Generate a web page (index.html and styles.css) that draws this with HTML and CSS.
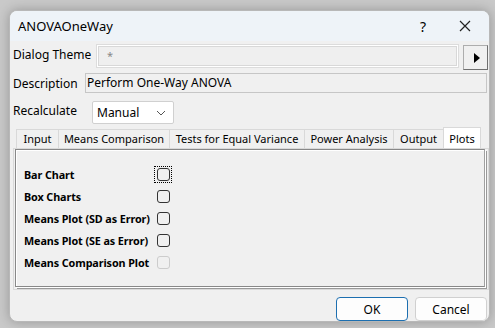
FILE: index.html
```html
<!DOCTYPE html>
<html lang="en">
<head>
    <meta charset="UTF-8">
    <title>ANOVAOneWay</title>
    <link rel="stylesheet" href="styles.css">
</head>
<body>
    <div class="dialog">
        <div class="titlebar">
            <span class="title">ANOVAOneWay</span>
            <span class="help">?</span>
            <span class="close">
                <svg width="12" height="12" viewBox="0 0 12 12"><path d="M1 1L11 11M11 1L1 11" stroke="#222" stroke-width="1.2" fill="none"/></svg>
            </span>
        </div>
        <div class="content">
            <div class="row theme-row">
                <label class="lbl">Dialog Theme</label>
                <div class="theme-box">*</div>
                <button class="arrow-btn">
                    <svg width="8" height="12" viewBox="0 0 8 12"><path d="M1 1L7 6L1 11Z" fill="#000"/></svg>
                </button>
            </div>
            <div class="row desc-row">
                <label class="lbl">Description</label>
                <div class="desc-box">Perform One-Way ANOVA</div>
            </div>
            <div class="row recalc-row">
                <label class="lbl">Recalculate</label>
                <div class="select">
                    <span>Manual</span>
                    <svg width="10" height="6" viewBox="0 0 10 6"><path d="M1 1L5 5L9 1" stroke="#555" stroke-width="1" fill="none"/></svg>
                </div>
            </div>
            <div class="tabs">
                <div class="tab t-input">Input</div>
                <div class="tab t-means">Means Comparison</div>
                <div class="tab t-tests">Tests for Equal Variance</div>
                <div class="tab t-power">Power Analysis</div>
                <div class="tab t-output">Output</div>
                <div class="tab active">Plots</div>
            </div>
            <div class="panel">
                <div class="panel-inner">
                    <div class="check-row"><span class="check-lbl">Bar Chart</span><span class="focus"><span class="box"></span></span></div>
                    <div class="check-row"><span class="check-lbl">Box Charts</span><span class="box"></span></div>
                    <div class="check-row"><span class="check-lbl">Means Plot (SD as Error)</span><span class="box"></span></div>
                    <div class="check-row"><span class="check-lbl">Means Plot (SE as Error)</span><span class="box"></span></div>
                    <div class="check-row"><span class="check-lbl">Means Comparison Plot</span><span class="box disabled"></span></div>
                </div>
            </div>
            <div class="buttons">
                <button class="btn primary">OK</button>
                <button class="btn">Cancel</button>
            </div>
        </div>
    </div>
</body>
</html>
```

FILE: styles.css
```css
html, body {
    margin: 0;
    padding: 0;
}
body {
    width: 495px;
    height: 328px;
    overflow: hidden;
    background: #c9c9c9;
    font-family: 'Noto Sans', 'Open Sans', sans-serif;
    color: #000;
}
.dialog {
    margin: 10px 0 0 9px;
    width: 481px;
    height: 312px;
    background: #f0f0f0;
    border: 1px solid #b8b8b8;
    border-radius: 8px;
    box-shadow: 0 0 12px rgba(0, 0, 0, 0.25);
    overflow: hidden;
    box-sizing: border-box;
}
.titlebar {
    height: 30px;
    background: #eef3f8;
    display: flex;
    align-items: center;
    padding-left: 8px;
    font-size: 13px;
}
.title {
    flex: 1;
}
.help {
    width: 18px;
    margin-right: 21px;
    font-size: 14px;
}
.close {
    width: 30px;
    display: flex;
    align-items: center;
}
.content {
    padding: 3px 0 0 3px;
}
.row {
    display: flex;
    align-items: center;
    font-size: 12px;
}
.lbl {
    display: block;
}
.theme-row {
    height: 28px;
    align-items: flex-start;
}
.theme-row .lbl {
    width: 83px;
    margin-top: 2px;
}
.theme-box {
    width: 363px;
    height: 24px;
    border: 1px solid #dcdcdc;
    box-shadow: inset 0 0 0 1px #fff, inset 0 0 0 2px #d8d8d8;
    background: #efefef;
    color: #888;
    font-size: 11px;
    padding-left: 10px;
    box-sizing: border-box;
    line-height: 22px;
}
.arrow-btn {
    width: 25px;
    height: 25px;
    margin-left: 4px;
    border: 1px solid #adadad;
    border-right-color: #6f6f6f;
    border-bottom-color: #6f6f6f;
    background: #f0f0f0;
    padding: 0 0 0 9px;
    display: flex;
    align-items: center;
    box-sizing: border-box;
    margin-top: 1px;
}
.desc-row {
    margin-top: 1px;
    height: 20px;
}
.desc-row .lbl {
    width: 72px;
}
.desc-box {
    width: 402px;
    height: 20px;
    border: 1px solid #c6c6c6;
    background: #f0f0f0;
    box-sizing: border-box;
    line-height: 18px;
    padding-left: 1px;
}
.recalc-row {
    margin-top: 8px;
    height: 24px;
    align-items: flex-start;
}
.recalc-row .lbl {
    width: 79px;
    margin-top: 1px;
}
.select {
    width: 82px;
    height: 23px;
    background: #fff;
    border: 1px solid #d0d0d0;
    border-radius: 2px;
    box-sizing: border-box;
    display: flex;
    align-items: center;
    justify-content: space-between;
    padding: 0 7px 0 4px;
    font-size: 12px;
}
.tabs {
    display: flex;
    margin-top: 4px;
    margin-left: 3px;
    height: 19px;
    font-size: 11px;
}
.tab {
    border: 1px solid #d9d9d9;
    border-bottom: none;
    background: #f0f0f0;
    box-sizing: border-box;
    text-align: center;
    line-height: 18px;
    margin-right: -1px;
}
.t-input { width: 43px; }
.t-means { width: 112px; }
.t-tests { width: 136px; }
.t-power { width: 90px; }
.t-output { width: 51px; }
.tab.active {
    width: 38px;
    background: #fff;
    height: 21px;
    margin-top: -2px;
    line-height: 22px;
}
.panel {
    width: 476px;
    height: 142px;
    border: 1px solid #d9d9d9;
    background: #f0f0f0;
    box-sizing: border-box;
    padding: 0 3px 3px 1px;
}
.panel-inner {
    height: 138px;
    border: 1px solid #888;
    border-right-color: #a0a0a0;
    box-shadow: inset 1px 1px 0 #fff, 1px 1px 0 #fff, 2px 2px 0 #999;
    box-sizing: border-box;
    padding: 13px 0 0 8px;
}
.check-row {
    display: flex;
    align-items: center;
    height: 22px;
}
.check-lbl {
    width: 133px;
    font-size: 10.8px;
    font-weight: bold;
    letter-spacing: -0.1px;
}
.box {
    display: block;
    width: 11px;
    height: 11px;
    border: 1px solid #333;
    border-radius: 3px;
    background: #f0f0f0;
}
.box.disabled {
    border-color: #ccc;
}
.focus {
    display: block;
    outline: 1px dotted #000;
    margin-left: -2px;
    padding: 1px 1px 1px 2px;
}
.buttons {
    display: flex;
    justify-content: flex-end;
    gap: 7px;
    margin-top: 7px;
    padding-right: 2px;
}
.btn {
    width: 72px;
    height: 24px;
    font-family: 'Noto Sans', 'Open Sans', sans-serif;
    font-size: 12px;
    background: #fdfdfd;
    border: 1px solid #d0d0d0;
    border-radius: 4px;
    color: #000;
}
.btn.primary {
    border-color: #1d6fb0;
}
```
